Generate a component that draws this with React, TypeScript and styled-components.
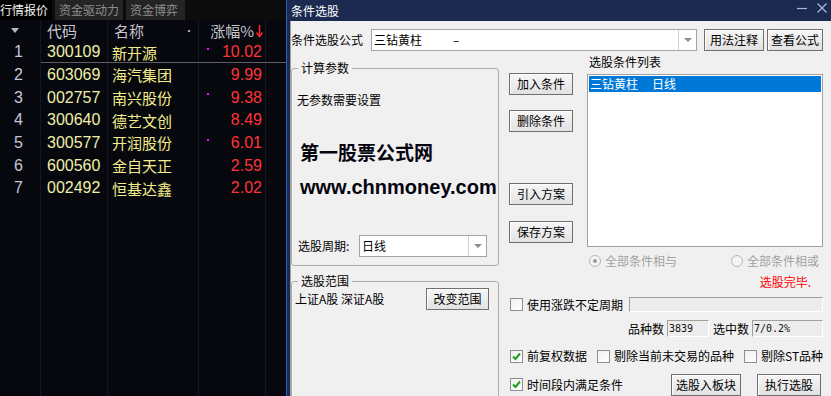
import React from "react";
import styled, { createGlobalStyle } from "styled-components";

const GlobalStyle = createGlobalStyle`
  html, body { margin: 0; padding: 0; background: #f0f0f0; overflow: hidden; }
  #root { width: 831px; height: 396px; }
  *, *::before, *::after { box-sizing: border-box; }
`;

const CJK = `"Noto Sans CJK SC", "Liberation Sans", sans-serif`;
const NUM = `"Liberation Sans", "Noto Sans CJK SC", sans-serif`;
const MONO = `"DejaVu Sans Mono", "Liberation Mono", monospace`;

const Root = styled.div`
  display: flex;
  width: 831px;
  height: 396px;
  overflow: hidden;
  font-family: ${CJK};
`;

/* ---------------- quote panel ---------------- */
const Quote = styled.div`
  width: 286px;
  flex: none;
  display: flex;
  flex-direction: column;
  background: #07070e;
`;

const TabStrip = styled.div`
  display: flex;
  gap: 3px;
  height: 20px;
  flex: none;
  background: #0c0c0c;
`;

const Tab = styled.div<{ $active?: boolean; $w: number }>`
  width: ${(p) => p.$w}px;
  height: 20px;
  line-height: 20px;
  font-size: 12px;
  padding-left: ${(p) => (p.$active ? 0 : 4)}px;
  background: ${(p) => (p.$active ? "#000" : "#242424")};
  color: ${(p) => (p.$active ? "#f2f2f2" : "#8e8e8e")};
  white-space: nowrap;
`;

const COLS = "40px 67px 91px 67px 21px";

const Table = styled.div`
  flex: 1;
  background-image: linear-gradient(
    to right,
    transparent 0 40px,
    #171723 40px 41px,
    transparent 41px 107px,
    #171723 107px 108px,
    transparent 108px 198px,
    #171723 198px 199px,
    transparent 199px 265px,
    #171723 265px 266px,
    transparent 266px
  );
`;

const HeadRow = styled.div`
  display: grid;
  grid-template-columns: ${COLS};
  height: 21px;
  color: #c6c6cc;
  font-size: 15px;
`;

const HeadCell = styled.div<{ $pl?: number; $end?: boolean; $between?: boolean }>`
  display: flex;
  align-items: center;
  padding-left: ${(p) => p.$pl ?? 0}px;
  padding-right: ${(p) => (p.$end ? 2 : p.$between ? 4 : 0)}px;
  justify-content: ${(p) => (p.$end ? "flex-end" : p.$between ? "space-between" : "flex-start")};
  white-space: nowrap;
`;

const Row = styled.div<{ $sel?: boolean }>`
  display: grid;
  grid-template-columns: ${COLS};
  height: 22.67px;
  position: relative;
  &::after {
    content: "";
    display: ${(p) => (p.$sel ? "block" : "none")};
    position: absolute;
    left: 41px;
    right: 0;
    bottom: 1px;
    height: 1px;
    background: #5e5e6a;
  }
`;

const Cell = styled.div<{ $kind: "num" | "code" | "name" | "val" }>`
  display: flex;
  align-items: center;
  position: relative;
  white-space: nowrap;
  font-family: ${(p) => (p.$kind === "name" ? CJK : NUM)};
  font-size: ${(p) => (p.$kind === "name" ? 15 : 16)}px;
  padding-left: ${(p) => ({ num: 14, code: 7, name: 5, val: 0 }[p.$kind])}px;
  padding-right: ${(p) => (p.$kind === "val" ? 3 : 0)}px;
  justify-content: ${(p) => (p.$kind === "val" ? "flex-end" : "flex-start")};
  color: ${(p) => ({ num: "#c2c8da", code: "#eef0a8", name: "#f4ee8a", val: "#ff3434" }[p.$kind])};
`;

const Mark = styled.span`
  position: absolute;
  left: 9px;
  top: 7px;
  width: 2px;
  height: 2px;
  background: #ff00ff;
`;

/* ---------------- dialog ---------------- */
const Dialog = styled.div`
  flex: 1;
  display: flex;
  flex-direction: column;
  border-left: 1px solid #2362c4;
  background: #f0f0f0;
`;

const TitleBar = styled.div`
  height: 21px;
  flex: none;
  background: #1c2a52;
  display: flex;
  align-items: center;
  padding: 0 4px;
  color: #fff;
  font-size: 12px;
  line-height: 14px;
`;

const WinControls = styled.div`
  margin-left: auto;
  align-self: flex-start;
  margin-top: 3px;
  display: flex;
  gap: 10px;
`;

const Body = styled.div`
  flex: 1;
  display: flex;
  flex-direction: column;
  border-left: 3px solid #1c2a52;
  box-shadow: inset 1px 0 #a0a0a0;
  padding: 8px 8px 0 1px;
  font-size: 12px;
  line-height: 14px;
  color: #000;
  min-height: 0;
`;

const FormulaRow = styled.div`
  display: flex;
  align-items: center;
  height: 22px;
  flex: none;
`;

const Label = styled.span<{ $w?: number; $ml?: number }>`
  width: ${(p) => (p.$w ? `${p.$w}px` : "auto")};
  margin-left: ${(p) => p.$ml ?? 0}px;
  flex: none;
  white-space: nowrap;
`;

const Combo = styled.div<{ $w: number }>`
  width: ${(p) => p.$w}px;
  height: 22px;
  flex: none;
  display: flex;
  background: #fff;
  border: 1px solid #a4a4a4;
`;

const ComboText = styled.div`
  flex: 1;
  padding-left: 2px;
  line-height: 20px;
  white-space: nowrap;
  display: flex;
`;

const Dash = styled.span`
  margin-left: 31px;
`;

const ComboArrow = styled.div`
  width: 18px;
  border-left: 1px solid #d0d0d0;
  display: flex;
  align-items: center;
  justify-content: center;
  &::before {
    content: "";
    border-left: 4px solid transparent;
    border-right: 4px solid transparent;
    border-top: 4px solid #8c8c8c;
  }
`;

const Button = styled.div<{ $w: number; $ml?: number; $mt?: number }>`
  width: ${(p) => p.$w}px;
  height: 22px;
  flex: none;
  margin-left: ${(p) => p.$ml ?? 0}px;
  margin-top: ${(p) => p.$mt ?? 0}px;
  display: flex;
  align-items: center;
  justify-content: center;
  border: 1px solid #707070;
  background: linear-gradient(#f6f6f6, #e2e2e2);
  box-shadow: inset 1px 1px #fff;
  font-size: 12px;
  color: #000;
  white-space: nowrap;
`;

const Main = styled.div`
  display: flex;
  margin-top: 4px;
  flex: 1;
  min-height: 0;
`;

const LeftCol = styled.div`
  width: 208px;
  flex: none;
  display: flex;
  flex-direction: column;
`;

const Group = styled.div<{ $mt: number; $h: number }>`
  position: relative;
  margin-top: ${(p) => p.$mt}px;
  height: ${(p) => p.$h}px;
  flex: none;
  border: 1px solid #adadad;
  border-radius: 3px;
  display: flex;
  flex-direction: column;
`;

const Legend = styled.span`
  position: absolute;
  top: -8px;
  left: 6px;
  padding: 0 3px;
  background: #f0f0f0;
  line-height: 14px;
`;

const Plain = styled.div<{ $mt: number; $pl?: number }>`
  margin-top: ${(p) => p.$mt}px;
  padding-left: ${(p) => p.$pl ?? 0}px;
  line-height: 14px;
  white-space: nowrap;
`;

const BigTitle = styled.div<{ $mt: number; $size: number; $latin?: boolean }>`
  margin-top: ${(p) => p.$mt}px;
  padding-left: 3px;
  line-height: 24px;
  height: 24px;
  font-size: ${(p) => p.$size}px;
  font-weight: bold;
  font-family: ${(p) => (p.$latin ? NUM : CJK)};
  color: #050510;
  white-space: nowrap;
`;

const InlineRow = styled.div<{ $mt: number; $pl?: number; $pr?: number; $between?: boolean }>`
  display: flex;
  align-items: center;
  height: 22px;
  margin-top: ${(p) => p.$mt}px;
  padding-left: ${(p) => p.$pl ?? 0}px;
  padding-right: ${(p) => p.$pr ?? 0}px;
  justify-content: ${(p) => (p.$between ? "space-between" : "flex-start")};
`;

const RightCol = styled.div`
  margin-left: 10px;
  width: 314px;
  flex: none;
  display: flex;
  flex-direction: column;
`;

const TopRow = styled.div`
  display: flex;
  height: 192px;
  flex: none;
`;

const ButtonsCol = styled.div`
  width: 64px;
  flex: none;
  display: flex;
  flex-direction: column;
  padding-top: 18px;
`;

const ListCol = styled.div`
  margin-left: 14px;
  width: 236px;
  flex: none;
  display: flex;
  flex-direction: column;
`;

const ListLabel = styled.div`
  padding-left: 2px;
  line-height: 14px;
`;

const ListBox = styled.div`
  margin-top: 5px;
  height: 173px;
  border: 1px solid #a0a0a0;
  background: #fff;
  padding: 1px;
`;

const ListItem = styled.div`
  height: 16px;
  line-height: 16px;
  background: #0078d7;
  color: #fff;
  padding-left: 1px;
  display: flex;
  gap: 14px;
  white-space: nowrap;
`;

const FlexRow = styled.div<{ $mt: number; $h: number; $pl?: number; $end?: boolean }>`
  display: flex;
  align-items: center;
  margin-top: ${(p) => p.$mt}px;
  height: ${(p) => p.$h}px;
  padding-left: ${(p) => p.$pl ?? 0}px;
  justify-content: ${(p) => (p.$end ? "flex-end" : "flex-start")};
  flex: none;
  white-space: nowrap;
`;

const RadioItem = styled.div<{ $w?: number }>`
  display: flex;
  align-items: center;
  width: ${(p) => (p.$w ? `${p.$w}px` : "auto")};
  flex: none;
  color: #a2a2a2;
`;

const RadioCircle = styled.span<{ $on?: boolean }>`
  width: 12px;
  height: 12px;
  border-radius: 50%;
  border: 1px solid #b6b6b6;
  background: #f4f4f4;
  margin-right: 4px;
  display: flex;
  align-items: center;
  justify-content: center;
  &::after {
    content: "";
    display: ${(p) => (p.$on ? "block" : "none")};
    width: 4px;
    height: 4px;
    border-radius: 50%;
    background: #9c9c9c;
  }
`;

const Status = styled.div`
  margin-top: 7px;
  height: 14px;
  line-height: 14px;
  text-align: right;
  padding-right: 12px;
  color: #ff0000;
  flex: none;
`;

const CheckItem = styled.div<{ $w?: number }>`
  display: flex;
  align-items: center;
  width: ${(p) => (p.$w ? `${p.$w}px` : "auto")};
  flex: none;
  white-space: nowrap;
`;

const CheckBox = styled.span`
  width: 13px;
  height: 13px;
  flex: none;
  border: 1px solid #8e8e8e;
  background: linear-gradient(135deg, #f0f0f0, #ffffff);
  margin-right: 4px;
  display: flex;
  align-items: center;
  justify-content: center;
`;

const Sunken = styled.div<{ $w: number; $h: number; $ml?: number }>`
  width: ${(p) => p.$w}px;
  height: ${(p) => p.$h}px;
  margin-left: ${(p) => p.$ml ?? 0}px;
  flex: none;
  border-top: 1px solid #a0a0a0;
  border-left: 1px solid #a0a0a0;
  border-bottom: 1px solid #ffffff;
  border-right: 1px solid #ffffff;
  background: #ececec;
  font-family: ${MONO};
  font-size: 10px;
  line-height: 15px;
  padding-left: 1px;
  color: #111;
`;

/* ---------------- data ---------------- */
const rows = [
  { n: 1, code: "300109", name: "新开源", val: "10.02", mark: true },
  { n: 2, code: "603069", name: "海汽集团", val: "9.99", mark: false },
  { n: 3, code: "002757", name: "南兴股份", val: "9.38", mark: true },
  { n: 4, code: "300640", name: "德艺文创", val: "8.49", mark: false },
  { n: 5, code: "300577", name: "开润股份", val: "6.01", mark: true },
  { n: 6, code: "600560", name: "金自天正", val: "2.59", mark: false },
  { n: 7, code: "002492", name: "恒基达鑫", val: "2.02", mark: false },
];

const Check = ({ on }: { on?: boolean }) => (
  <CheckBox>
    {on && (
      <svg width="9" height="9" viewBox="0 0 9 9">
        <polyline points="1,4.5 3.5,7 8,1.5" fill="none" stroke="#1f9e1f" strokeWidth="2" />
      </svg>
    )}
  </CheckBox>
);

export default function App() {
  return (
    <>
      <GlobalStyle />
      <Root>
        <Quote>
          <TabStrip>
            <Tab $active $w={52}>行情报价</Tab>
            <Tab $w={68}>资金驱动力</Tab>
            <Tab $w={59}>资金博弈</Tab>
          </TabStrip>
          <Table>
            <HeadRow>
              <HeadCell $pl={11}>
                <svg width="8" height="6" viewBox="0 0 8 6">
                  <polygon points="0,0 8,0 4,5" fill="#b8b8c0" />
                </svg>
              </HeadCell>
              <HeadCell $pl={7}>代码</HeadCell>
              <HeadCell $pl={7} $between>
                <span>名称</span>
                <span style={{ fontSize: 10 }}>•</span>
              </HeadCell>
              <HeadCell $end>
                <span>涨幅%</span>
                <svg width="7" height="14" viewBox="0 0 7 14" style={{ marginLeft: 2 }}>
                  <line x1="3.5" y1="1" x2="3.5" y2="12" stroke="#ff2a2a" strokeWidth="1.5" />
                  <polyline points="0.5,8.5 3.5,12.5 6.5,8.5" fill="none" stroke="#ff2a2a" strokeWidth="1.5" />
                </svg>
              </HeadCell>
              <HeadCell />
            </HeadRow>
            {rows.map((r) => (
              <Row key={r.n} $sel={r.n === 1}>
                <Cell $kind="num">{r.n}</Cell>
                <Cell $kind="code">{r.code}</Cell>
                <Cell $kind="name">{r.name}</Cell>
                <Cell $kind="val">
                  {r.mark && <Mark />}
                  {r.val}
                </Cell>
                <div />
              </Row>
            ))}
          </Table>
        </Quote>

        <Dialog>
          <TitleBar>
            条件选股
            <WinControls>
              <svg width="10" height="10" viewBox="0 0 10 10">
                <line x1="0" y1="5.5" x2="10" y2="5.5" stroke="#a8b8d8" strokeWidth="1.2" />
              </svg>
              <svg width="10" height="10" viewBox="0 0 10 10">
                <line x1="0.5" y1="0.5" x2="9.5" y2="9.5" stroke="#a8b8d8" strokeWidth="1.2" />
                <line x1="9.5" y1="0.5" x2="0.5" y2="9.5" stroke="#a8b8d8" strokeWidth="1.2" />
              </svg>
            </WinControls>
          </TitleBar>
          <Body>
            <FormulaRow>
              <Label $w={80}>条件选股公式</Label>
              <Combo $w={326}>
                <ComboText>
                  三钻黄柱<Dash>–</Dash>
                </ComboText>
                <ComboArrow />
              </Combo>
              <Button $w={60} $ml={7}>用法注释</Button>
              <Button $w={56} $ml={3}>查看公式</Button>
            </FormulaRow>

            <Main>
              <LeftCol>
                <Group $mt={13} $h={198}>
                  <Legend>计算参数</Legend>
                  <Plain $mt={24} $pl={5}>无参数需要设置</Plain>
                  <BigTitle $mt={33} $size={19} style={{ paddingLeft: 8 }}>第一股票公式网</BigTitle>
                  <BigTitle $mt={11} $size={20} $latin style={{ paddingLeft: 8 }}>www.chnmoney.com</BigTitle>
                  <InlineRow $mt={36} $pl={6}>
                    <Label $w={61}>选股周期:</Label>
                    <Combo $w={128}>
                      <ComboText>日线</ComboText>
                      <ComboArrow />
                    </Combo>
                  </InlineRow>
                </Group>
                <Group $mt={15} $h={140}>
                  <Legend>选股范围</Legend>
                  <InlineRow $mt={6} $pl={3} $pr={9} $between>
                    <span>上证A股 深证A股</span>
                    <Button $w={63}>改变范围</Button>
                  </InlineRow>
                </Group>
              </LeftCol>

              <RightCol>
                <TopRow>
                  <ButtonsCol>
                    <Button $w={64}>加入条件</Button>
                    <Button $w={64} $mt={15}>删除条件</Button>
                    <Button $w={64} $mt={51}>引入方案</Button>
                    <Button $w={64} $mt={16}>保存方案</Button>
                  </ButtonsCol>
                  <ListCol>
                    <ListLabel>选股条件列表</ListLabel>
                    <ListBox>
                      <ListItem>
                        <span>三钻黄柱</span>
                        <span>日线</span>
                      </ListItem>
                    </ListBox>
                  </ListCol>
                </TopRow>

                <FlexRow $mt={7} $h={14} $pl={80}>
                  <RadioItem $w={142}>
                    <RadioCircle $on />
                    全部条件相与
                  </RadioItem>
                  <RadioItem>
                    <RadioCircle />
                    全部条件相或
                  </RadioItem>
                </FlexRow>

                <Status>选股完毕.</Status>

                <FlexRow $mt={8} $h={15} $pl={1}>
                  <CheckItem>
                    <Check />
                    使用涨跌不定周期
                  </CheckItem>
                  <Sunken $w={194} $h={15} style={{ marginLeft: "auto" }} />
                </FlexRow>

                <FlexRow $mt={8} $h={17} $end>
                  <Label>品种数</Label>
                  <Sunken $w={42} $h={17} $ml={3}>3839</Sunken>
                  <Label $ml={4}>选中数</Label>
                  <Sunken $w={71} $h={17} $ml={3}>7/0.2%</Sunken>
                </FlexRow>

                <FlexRow $mt={12} $h={14} $pl={1}>
                  <CheckItem $w={87}>
                    <Check on />
                    前复权数据
                  </CheckItem>
                  <CheckItem $w={147}>
                    <Check />
                    剔除当前未交易的品种
                  </CheckItem>
                  <CheckItem>
                    <Check />
                    剔除ST品种
                  </CheckItem>
                </FlexRow>

                <FlexRow $mt={10} $h={23} $pl={1}>
                  <CheckItem $w={161}>
                    <Check on />
                    时间段内满足条件
                  </CheckItem>
                  <Button $w={70}>选股入板块</Button>
                  <Button $w={64} $ml={16}>执行选股</Button>
                </FlexRow>
              </RightCol>
            </Main>
          </Body>
        </Dialog>
      </Root>
    </>
  );
}
